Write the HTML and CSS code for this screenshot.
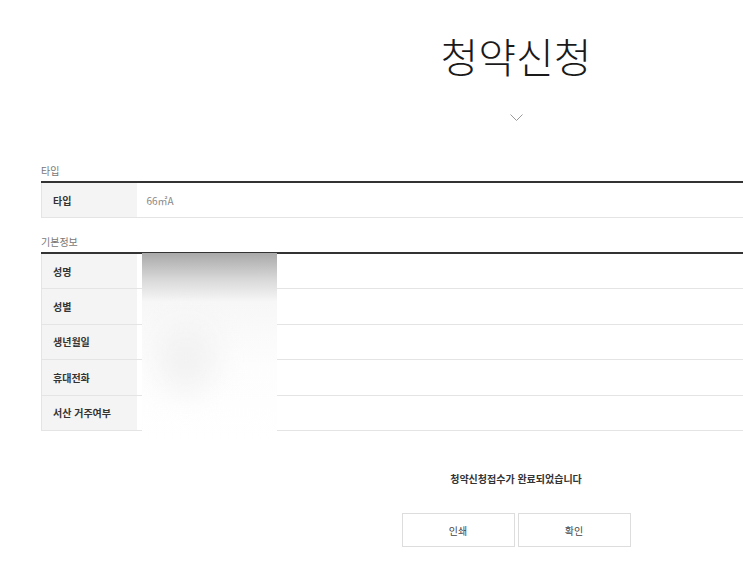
FILE: index.html
```html
<!DOCTYPE html>
<html lang="ko">
<head>
  <meta charset="UTF-8" />
  <meta name="viewport" content="width=device-width, initial-scale=1.0"/>
  <title>청약신청</title>
  <link rel="stylesheet" href="styles.css">
</head>
<body>
  <div class="page">
    <h1 class="title">청약신청</h1>
    <div class="arrow">
      <svg width="13" height="8" viewBox="0 0 13 8"><path d="M0.5 0.5 L6.5 6.5 L12.5 0.5" fill="none" stroke="#999" stroke-width="1"/></svg>
    </div>

    <p class="label">타입</p>
    <table class="info">
      <tr><th>타입</th><td>66㎡A</td></tr>
    </table>

    <p class="label">기본정보</p>
    <div class="masked">
      <table class="info">
        <tr><th>성명</th><td></td></tr>
        <tr><th>성별</th><td></td></tr>
        <tr><th>생년월일</th><td></td></tr>
        <tr><th>휴대전화</th><td></td></tr>
        <tr><th>서산 거주여부</th><td></td></tr>
      </table>
      <div class="blur"><span class="blob"></span></div>
    </div>

    <p class="done">청약신청접수가 완료되었습니다</p>
    <div class="btns">
      <button>인쇄</button>
      <button>확인</button>
    </div>
  </div>
</body>
</html>
```

FILE: styles.css
```css
* { margin: 0; padding: 0; box-sizing: border-box; }
body {
  font-family: 'Noto Sans CJK KR', 'Noto Sans', sans-serif;
  background: #fff;
  color: #333;
  overflow: hidden;
}
.page {
  width: 950px;
  margin-left: 41px;
}
.title {
  text-align: center;
  font-size: 41px;
  font-weight: 300;
  line-height: 46px;
  padding-top: 32px;
  color: #1a1a1a;
}
.arrow {
  text-align: center;
  height: 8px;
  margin-top: 36px;
  line-height: 0;
}
.label {
  font-size: 10px;
  color: #777;
  line-height: 14px;
  margin-top: 42px;
  margin-bottom: 3px;
}
.info {
  width: 100%;
  border-collapse: collapse;
  border-top: 2px solid #333;
}
.info th, .info td {
  height: 35.5px;
  font-size: 10px;
  border-bottom: 1px solid #e4e4e4;
  text-align: left;
  vertical-align: middle;
}
.info th {
  width: 95px;
  background: #f4f4f4;
  border-left: 1px solid #e4e4e4;
  padding-left: 11px;
  font-weight: 700;
  color: #333;
}
.info td {
  padding-left: 10px;
  color: #888;
}
.page .label:nth-of-type(2) { margin-top: 17px; }
.masked { position: relative; }
.blur {
  position: absolute;
  left: 101px;
  top: 1px;
  width: 135px;
  height: 188px;
  background: linear-gradient(#a9a9a9 0%, #d8d8d8 14%, #f7f7f7 26%, #fdfdfd 60%, #fff 100%);
  overflow: hidden;
}
.blob {
  position: absolute;
  left: 14px;
  top: 70px;
  width: 60px;
  height: 70px;
  border-radius: 50%;
  background: #f2f2f2;
  filter: blur(14px);
}
.done {
  text-align: center;
  font-size: 10px;
  font-weight: 700;
  color: #333;
  margin-top: 40px;
}
.btns {
  display: flex;
  justify-content: center;
  gap: 3px;
  margin-top: 27px;
}
.btns button {
  width: 113px;
  height: 34px;
  background: #fff;
  border: 1px solid #ddd;
  font-family: inherit;
  font-size: 10px;
  color: #444;
}
```
